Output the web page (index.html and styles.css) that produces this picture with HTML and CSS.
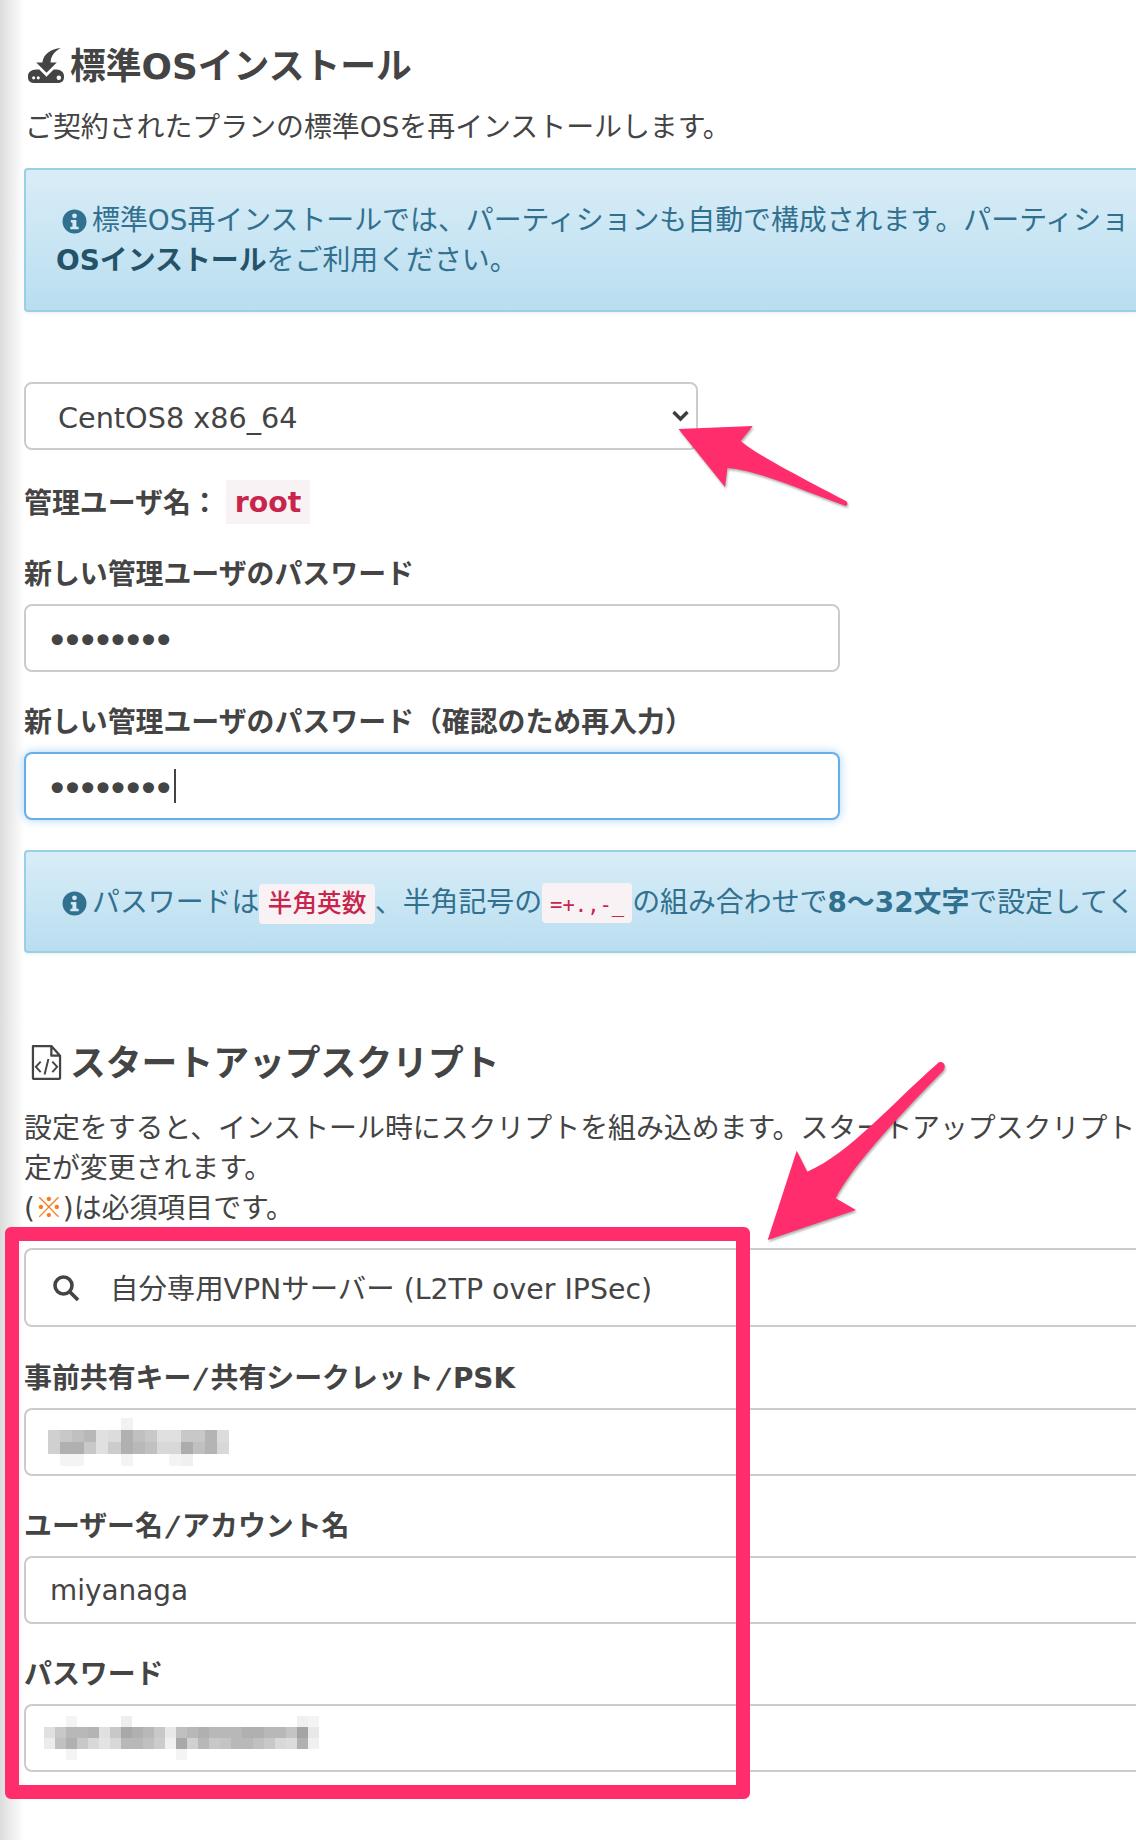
FILE: index.html
```html
<!DOCTYPE html>
<html lang="ja">
<head>
<meta charset="utf-8">
<title>標準OSインストール</title>
<link rel="stylesheet" href="styles.css">
</head>
<body>
<div class="edge"></div>
<main class="page">
  <h3 class="heading heading-first">
    <svg class="h-icon" viewBox="0 0 36 36" aria-hidden="true"><path fill="#444" d="M32 1C22 2 15 7 14 15H8l10 10 10-10h-6C22 9 26 4 32 1Z"/><path fill="#444" d="M8 22h3l7 7 7-7h3c4 0 7 3 7 6v2c0 3-2.500 5-5 5H5c-2.500 0-5-2-5-5v-2c0-3 3-6 8-6Z"/><circle cx="5.500" cy="30" r="1.500" fill="#fff"/><circle cx="10" cy="30" r="1.500" fill="#fff"/><circle cx="30" cy="30" r="2.200" fill="#fff"/></svg>
    <span>標準OSインストール</span>
  </h3>
  <p class="text lead">ご契約されたプランの標準OSを再インストールします。</p>
  <div class="alert alert-tall">
    <div class="alert-line"><svg class="i-icon" viewBox="0 0 24 24" aria-hidden="true"><circle cx="12" cy="12" r="11.500" fill="#31708f"/><circle cx="12" cy="6.500" r="2.300" fill="#d3e9f5"/><path fill="#d3e9f5" d="M8.500 10.500h5.300V17H16v2.500H8V17h2v-4H8.500Z"/></svg><span>標準OS再インストールでは、パーティションも自動で構成されます。パーティショ</span></div>
    <div class="alert-line2"><b>OSインストール</b>をご利用ください。</div>
  </div>

  <div class="select">
    <span class="select-text">CentOS8 x86_64</span>
    <svg class="chev" viewBox="0 0 18 14" aria-hidden="true"><path d="M2 3l7 7 7-7" fill="none" stroke="#3d3d3d" stroke-width="3.400"/></svg>
  </div>

  <div class="user-row"><b>管理ユーザ名：</b><code class="code code-big">root</code></div>

  <label class="label">新しい管理ユーザのパスワード</label>
  <div class="input input-short dots">••••••••</div>

  <label class="label">新しい管理ユーザのパスワード（確認のため再入力）</label>
  <div class="input input-short input-focus dots">••••••••<i class="caret"></i></div>

  <div class="alert alert-short">
    <div class="alert-line"><svg class="i-icon" viewBox="0 0 24 24" aria-hidden="true"><circle cx="12" cy="12" r="11.500" fill="#31708f"/><circle cx="12" cy="6.500" r="2.300" fill="#d3e9f5"/><path fill="#d3e9f5" d="M8.500 10.500h5.300V17H16v2.500H8V17h2v-4H8.500Z"/></svg><span>パスワードは<code class="code">半角英数</code>、半角記号の<code class="code code-mono">=+.,-_</code>の組み合わせで<b>8〜32文字</b>で設定してく</span></div>
  </div>

  <h3 class="heading heading-second">
    <svg class="h-icon2" viewBox="0 0 32 38" aria-hidden="true"><path d="M2 2h19l9 10v23a1 1 0 0 1-1 1H3a1 1 0 0 1-1-1Z M21 2v10h9" fill="none" stroke="#444" stroke-width="2.300" stroke-linejoin="round"/><path d="M10 18l-5 5.500 5 5.500M22 18l5 5.500-5 5.500M18 15.500l-4 16" fill="none" stroke="#444" stroke-width="2"/></svg>
    <span>スタートアップスクリプト</span>
  </h3>
  <p class="text desc">設定をすると、インストール時にスクリプトを組み込めます。スタートアップスクリプト<br>定が変更されます。<br>(<span class="req">※</span>)は必須項目です。</p>

  <div class="input input-search">
    <svg class="search" viewBox="0 0 28 28" aria-hidden="true"><circle cx="11.500" cy="11.500" r="8.500" fill="none" stroke="#444" stroke-width="3.600"/><path d="M18 18l8 8" stroke="#444" stroke-width="3.800"/></svg>
    <span class="search-text">自分専用VPNサーバー (L2TP over IPSec)</span>
  </div>

  <label class="label label-c">事前共有キー<span class="sl">/</span>共有シークレット<span class="sl">/</span>PSK</label>
  <div class="input">
    <div class="mosaic m1">
      <i></i><i></i><i></i><i></i><i></i><i></i><i style="background:#f2f2f2"></i><i></i><i></i><i></i><i></i><i></i><i></i><i></i><i></i>
      <i style="background:#d0d0d0"></i><i style="background:#c8c8c8"></i><i style="background:#c0c0c0"></i><i style="background:#b8b8b8"></i><i style="background:#e0e0e0"></i><i style="background:#dcdcdc"></i><i style="background:#b0b0b0"></i><i style="background:#c0c0c0"></i><i style="background:#c8c8c8"></i><i style="background:#e0e0e0"></i><i style="background:#e0e0e0"></i><i style="background:#c8c8c8"></i><i style="background:#c8c8c8"></i><i style="background:#b4b4b4"></i><i style="background:#dcdcdc"></i>
      <i style="background:#d0d0d0"></i><i style="background:#b0b0b0"></i><i style="background:#b0b0b0"></i><i style="background:#c8c8c8"></i><i style="background:#e0e0e0"></i><i style="background:#cccccc"></i><i style="background:#b0b0b0"></i><i style="background:#b8b8b8"></i><i style="background:#c0c0c0"></i><i style="background:#d8d8d8"></i><i style="background:#d8d8d8"></i><i style="background:#acacac"></i><i style="background:#c0c0c0"></i><i style="background:#b4b4b4"></i><i style="background:#d8d8d8"></i>
      <i></i><i style="background:#f4f4f4"></i><i style="background:#f4f4f4"></i><i></i><i></i><i></i><i style="background:#f4f4f4"></i><i></i><i></i><i></i><i style="background:#f4f4f4"></i><i style="background:#f0f0f0"></i><i></i><i></i><i></i>
    </div>
  </div>

  <label class="label">ユーザー名<span class="sl">/</span>アカウント名</label>
  <div class="input">miyanaga</div>

  <label class="label">パスワード</label>
  <div class="input">
    <div class="mosaic m2">
      <i></i><i></i><i style="background:#f4f4f4"></i><i></i><i></i><i></i><i></i><i style="background:#eeeeee"></i><i></i><i></i><i></i><i></i><i></i><i></i><i></i><i></i><i></i><i></i><i></i><i></i><i></i><i></i><i></i><i style="background:#f0f0f0"></i><i style="background:#f4f4f4"></i>
      <i style="background:#e0e0e0"></i><i style="background:#c8c8c8"></i><i style="background:#b8b8b8"></i><i style="background:#b8b8b8"></i><i style="background:#b4b4b4"></i><i style="background:#e0e0e0"></i><i style="background:#c8c8c8"></i><i style="background:#a8a8a8"></i><i style="background:#b0b0b0"></i><i style="background:#b8b8b8"></i><i style="background:#c8c8c8"></i><i style="background:#e8e8e8"></i><i style="background:#c0c0c0"></i><i style="background:#b8b8b8"></i><i style="background:#b0b0b0"></i><i style="background:#b8b8b8"></i><i style="background:#b8b8b8"></i><i style="background:#b8b8b8"></i><i style="background:#b0b0b0"></i><i style="background:#b0b0b0"></i><i style="background:#b8b8b8"></i><i style="background:#b8b8b8"></i><i style="background:#c4c4c4"></i><i style="background:#a4a4a4"></i><i style="background:#e8e8e8"></i>
      <i style="background:#ececec"></i><i style="background:#c0c0c0"></i><i style="background:#b0b0b0"></i><i style="background:#c8c8c8"></i><i style="background:#d8d8d8"></i><i style="background:#e4e4e4"></i><i style="background:#d8d8d8"></i><i style="background:#b8b8b8"></i><i style="background:#b8b8b8"></i><i style="background:#c0c0c0"></i><i style="background:#cccccc"></i><i style="background:#f0f0f0"></i><i style="background:#a8a8a8"></i><i style="background:#d0d0d0"></i><i style="background:#b8b8b8"></i><i style="background:#c8c8c8"></i><i style="background:#c4c4c4"></i><i style="background:#b8b8b8"></i><i style="background:#b8b8b8"></i><i style="background:#c0c0c0"></i><i style="background:#c8c8c8"></i><i style="background:#d8d8d8"></i><i style="background:#dcdcdc"></i><i style="background:#b0b0b0"></i><i style="background:#f0f0f0"></i>
      <i></i><i></i><i style="background:#f4f4f4"></i><i></i><i></i><i></i><i></i><i></i><i></i><i></i><i></i><i></i><i style="background:#f4f4f4"></i><i></i><i></i><i></i><i></i><i></i><i></i><i></i><i></i><i></i><i></i><i></i><i></i>
    </div>
  </div>
</main>

<div class="highlight"></div>
<svg class="arrow arrow-top" viewBox="0 0 190 100" aria-hidden="true"><path fill="#ff2d6b" d="M8.500 9 82.800 6 70.800 21C82 31 110 47 176 81 179 84 177 87 173 85 125 67 85 50 57.400 48L55 67Z"/></svg>
<svg class="arrow arrow-bottom" viewBox="0 0 190 200" aria-hidden="true"><path fill="#ff2d6b" d="M7.700 190 36.700 100.700 47.300 121.700C90 103 130 55 177 14 181 9 188 14 183 21 130 75 90 120 75.700 148.300L96 160Z"/></svg>
</body>
</html>
```
FILE: styles.css
```css
* { box-sizing: border-box; }
html, body { margin: 0; padding: 0; background: #fff; }
body {
  width: 1136px;
  height: 1840px;
  overflow: hidden;
  position: relative;
  font-family: "DejaVu Sans", "Noto Sans CJK JP", sans-serif;
  color: #444;
  font-size: 27.9px;
}
.edge {
  position: absolute;
  left: 0; top: 0; bottom: 0;
  width: 24px;
  background: linear-gradient(to right, #dcdcdc, #fff);
}
.page {
  position: relative;
  padding: 0 0 0 24px;
  width: 1136px;
}
.heading {
  display: flex;
  align-items: center;
  margin: 0;
  font-size: 35.8px;
  line-height: 44px;
  font-weight: 700;
  color: #444;
  white-space: nowrap;
}
.heading span { padding-top: 2px; margin-bottom: -2px; }
.heading-first { padding-top: 43px; gap: 5px; }
.heading-second { margin-top: 87px; gap: 8px; }
.h-icon { width: 37px; height: 37px; margin-left: 4px; flex: none; }
.h-icon2 { width: 31px; height: 37px; margin-left: 7px; flex: none; }
.text { margin: 0; line-height: 40px; white-space: nowrap; }
.lead { margin-top: 21px; margin-left: 1px; }
.desc { margin-top: 25px; }
.req { color: #f57c20; font-family: "Noto Sans CJK JP", sans-serif; line-height: 0; }
.alert {
  border: 2px solid #9acfe8;
  border-right: 0;
  border-radius: 4px 0 0 4px;
  background: linear-gradient(#d9edf7, #b9def0);
  color: #31708f;
  width: 1112px;
  overflow: hidden;
  white-space: nowrap;
  box-shadow: 0 2px 3px rgba(0,0,0,.05);
}
.alert b { color: #245269; }
.alert-tall { height: 144px; margin-top: 20px; padding: 31px 0 0 36px; }
.alert-short { height: 103px; margin-top: 30px; padding: 31px 0 0 36px; }
.alert-short b { color: #31708f; }
.alert-line { display: flex; align-items: center; line-height: 40px; height: 40px; }
.alert-line span { flex: none; }
.alert-line2 { line-height: 40px; margin-left: -6px; }
.i-icon { width: 25px; height: 25px; flex: none; margin-right: 5px; }
.select, .input {
  display: flex;
  align-items: center;
  border: 2px solid #ccc;
  border-radius: 8px;
  background: #fff;
  height: 68px;
  white-space: nowrap;
}
.select {
  width: 674px;
  margin-top: 70px;
  padding: 0 6px 0 32px;
  justify-content: space-between;
}
.select-text { font-size: 28.700px; padding-top: 3px; }
.chev { width: 19px; height: 14px; }
.user-row {
  display: flex;
  align-items: center;
  margin-top: 30px;
  height: 44px;
}
.user-row b { font-weight: 700; margin: -2px 7px 0 0; }
.code {
  background: #f9f2f4;
  color: #c7254e;
  border-radius: 4px;
  padding: 0 8.500px;
  font-family: "DejaVu Sans", "Noto Sans CJK JP", sans-serif;
  font-size: 24.6px;
  font-weight: 500;
  display: inline-block;
  line-height: 40px;
  height: 40px;
}
.code-big {
  font-size: 28.400px;
  font-weight: 700;
  line-height: 46px;
  height: 44px;
  padding: 0 9px;
  border-radius: 0;
}
.code-mono { font-family: "DejaVu Sans Mono", monospace; font-size: 20.500px; padding: 2px 8px 0; }
.label {
  display: block;
  font-weight: 700;
  line-height: 40px;
  white-space: nowrap;
  margin: 29px 0 9px;
  padding-top: 2px;
}
.label-c { margin-top: 30px; }
.sl { display: inline-block; padding: 0 4.500px; transform: skewX(-13deg); }
.input { padding: 0 24px; width: 1112px; border-right: 0; border-radius: 8px 0 0 8px; }
.input-short { width: 816px; border-right: 2px solid #ccc; border-radius: 8px; }
.input-focus {
  border-color: #66afe9;
  box-shadow: 0 0 10px rgba(102,175,233,.55);
}
.dots { font-size: 38px; letter-spacing: -7.200px; padding-left: 20px; padding-top: 6px; }
.caret { width: 2px; height: 34px; background: #444; display: block; margin: -6px 0 0 6px; }
.input-search { height: 79px; margin-top: 19px; padding-left: 26px; gap: 30px; }
.search-text { font-size: 28.400px; margin-top: -2px; }
.search { width: 28px; height: 28px; flex: none; }
.mosaic { display: grid; }
.mosaic i { display: block; }
.m1 { margin-left: -2px; grid-template-columns: repeat(15, 12.100px); grid-auto-rows: 12px; }
.m2 { margin-left: -6px; grid-template-columns: repeat(25, 11px); grid-auto-rows: 11px; }
.highlight {
  position: absolute;
  left: 5px;
  top: 1227px;
  width: 745px;
  height: 572px;
  border: 14px solid #ff2d6b;
  border-radius: 6px;
}
.arrow { position: absolute; filter: drop-shadow(1px 2px 1px rgba(0,0,0,.3)); }
.arrow-top { left: 670px; top: 420px; width: 190px; height: 100px; }
.arrow-bottom { left: 760px; top: 1050px; width: 190px; height: 200px; }
```
